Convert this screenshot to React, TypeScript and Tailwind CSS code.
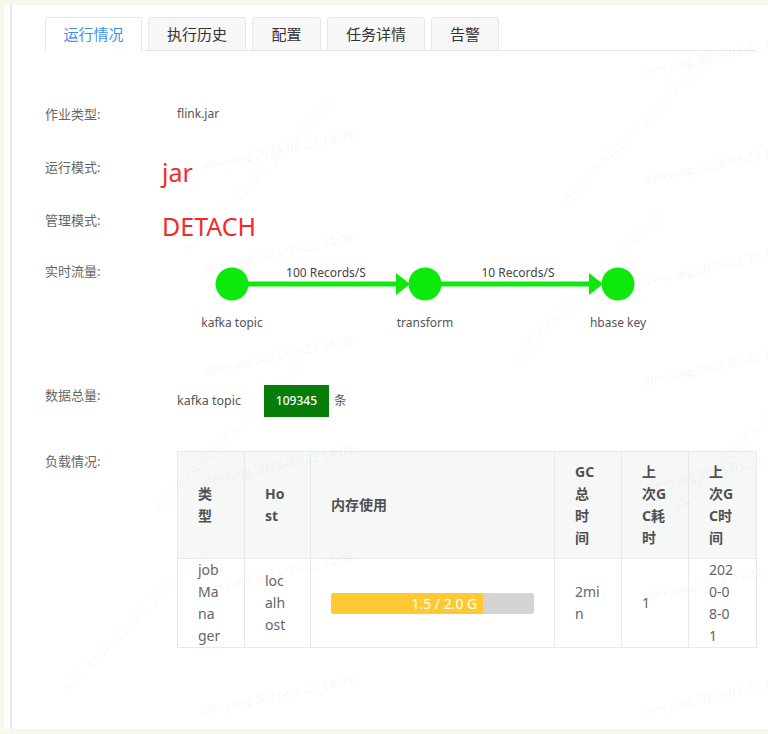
import React from "react";

const tabs = [
  { name: "运行情况", w: "w-[97px]", active: true },
  { name: "执行历史", w: "w-[98px]", active: false },
  { name: "配置", w: "w-[69px]", active: false },
  { name: "任务详情", w: "w-[98px]", active: false },
  { name: "告警", w: "w-[68px]", active: false },
];

// faint watermark text that lies over the page
const Mark = ({ className }: { className: string }) => (
  <span
    className={`absolute whitespace-nowrap font-['Liberation_Serif',serif] text-[14px] text-black/[0.06] -rotate-[12deg] ${className}`}
  >
    alexyang 2023-03-22 14:09
  </span>
);

const BigMark = ({ className }: { className: string }) => (
  <span
    className={`absolute whitespace-nowrap font-['Liberation_Sans',sans-serif] text-[15px] tracking-[1px] text-black/[0.035] -rotate-45 ${className}`}
  >
    ALEXYANGKF1 2023-03-22
  </span>
);

const Flow: React.FC = () => (
  <svg width="500" height="85" className="block">
    <line x1="86" y1="29" x2="236" y2="29" stroke="#0de80d" strokeWidth="5" />
    <polygon points="234,18 248,29 234,40" fill="#0de80d" />
    <line x1="279" y1="29" x2="429" y2="29" stroke="#0de80d" strokeWidth="5" />
    <polygon points="427,18 441,29 427,40" fill="#0de80d" />
    <circle cx="70" cy="29" r="16.5" fill="#0de80d" />
    <circle cx="263" cy="29" r="16.5" fill="#0de80d" />
    <circle cx="456" cy="29" r="16.5" fill="#0de80d" />
    <g fontSize="12" fill="#444" textAnchor="middle">
      <text x="164" y="22">100 Records/S</text>
      <text x="356" y="22">10 Records/S</text>
    </g>
    <g fontSize="12" fill="#555" textAnchor="middle">
      <text x="70" y="72">kafka topic</text>
      <text x="263" y="72">transform</text>
      <text x="456" y="72">hbase key</text>
    </g>
  </svg>
);

const th =
  "px-[20px] py-[9px] text-left align-middle font-bold text-[14px] leading-[22px] text-[#505050] bg-[#f6f7f7] border border-[#e6eaee] break-all";
const td =
  "px-[20px] py-0 text-left align-middle text-[14px] leading-[22px] text-[#666] border border-[#e6eaee] break-all";

const label = "w-[117px] text-[13px] leading-[20px] text-[#666]";

export default function App() {
  return (
    <div className="min-h-[734px] bg-[#f7f7ea] pt-[5px] pl-[4px] pb-[5px] font-['Noto_Sans','Noto_Sans_CJK_SC',sans-serif]">
      <div className="relative h-[724px] bg-white flex overflow-hidden">
        <div className="w-[7px]" />
        <div className="w-[2px] bg-[#e3e8ef]" />

        <div className="flex-1 pl-[33px] pr-[11px] pt-[12px]">
          {/* Tabs */}
          <div className="flex gap-[6px] border-b border-[#e4e7ed]">
            {tabs.map((t) => (
              <div
                key={t.name}
                className={`${t.w} h-[34px] -mb-px flex items-center justify-center rounded-t-[3px] border text-[15px] ${
                  t.active
                    ? "bg-white border-[#e4e7ed] border-b-white text-[#3f8fe6]"
                    : "bg-[#f7f7f7] border-[#e4e7ed] text-[#333]"
                }`}
              >
                {t.name}
              </div>
            ))}
          </div>

          {/* 作业类型 */}
          <div className="mt-[53px] flex items-start">
            <div className={label}>作业类型:</div>
            <div className="ml-[15px] text-[12px] leading-[20px] text-[#555]">flink.jar</div>
          </div>

          {/* 运行模式 */}
          <div className="mt-[33px] flex items-start">
            <div className={label}>运行模式:</div>
            <div className="text-[25px] leading-[30px] text-[#f42a2a]">jar</div>
          </div>

          {/* 管理模式 */}
          <div className="mt-[23px] flex items-start">
            <div className={label}>管理模式:</div>
            <div className="mt-[1px] text-[25px] leading-[30px] text-[#f42a2a]">DETACH</div>
          </div>

          {/* 实时流量 */}
          <div className="mt-[14px] flex items-start">
            <div className={`${label} mt-[6px]`}>实时流量:</div>
            <Flow />
          </div>

          {/* 数据总量 */}
          <div className="mt-[45px] flex items-start">
            <div className={label}>数据总量:</div>
            <div className="ml-[15px] flex items-center h-[32px] text-[12.5px] text-[#555]">
              <span>kafka topic</span>
              <span className="ml-[23px] w-[65px] h-[32px] flex items-center justify-center bg-[#067d06] text-[12px] text-white font-medium">
                109345
              </span>
              <span className="ml-[5px]">条</span>
            </div>
          </div>

          {/* 负载情况 */}
          <div className="mt-[34px] flex items-start">
            <div className={label}>负载情况:</div>
            <table className="ml-[15px] w-[579px] table-fixed border-collapse border border-[#e6eaee]">
              <colgroup>
                <col className="w-[67px]" />
                <col className="w-[66px]" />
                <col className="w-[244px]" />
                <col className="w-[67px]" />
                <col className="w-[67px]" />
                <col className="w-[68px]" />
              </colgroup>
              <thead>
                <tr>
                  <th className={th}>类型</th>
                  <th className={th}>Host</th>
                  <th className={th}>内存使用</th>
                  <th className={th}>GC总时间</th>
                  <th className={th}>上次GC耗时</th>
                  <th className={th}>上次GC时间</th>
                </tr>
              </thead>
              <tbody>
                <tr>
                  <td className={`${td} pr-[23px]`}>job Manager</td>
                  <td className={td}>localhost</td>
                  <td className={td}>
                    <div className="h-[21px] w-full rounded-[3px] bg-[#d4d4d4] overflow-hidden flex">
                      <div className="w-[75%] h-full bg-[#ffc933] text-right pr-[6px] text-[14px] leading-[21px] text-white">
                        1.5 / 2.0 G
                      </div>
                    </div>
                  </td>
                  <td className={td}>2min</td>
                  <td className={td}>1</td>
                  <td className={td}>2020-08-01</td>
                </tr>
              </tbody>
            </table>
          </div>
        </div>

        {/* watermark overlay */}
        <div className="pointer-events-none absolute inset-0">
          <Mark className="left-[196px] top-[135px]" />
          <Mark className="left-[196px] top-[238px]" />
          <Mark className="left-[196px] top-[340px]" />
          <Mark className="left-[196px] top-[450px]" />
          <Mark className="left-[196px] top-[558px]" />
          <Mark className="left-[196px] top-[680px]" />
          <Mark className="left-[638px] top-[40px]" />
          <Mark className="left-[638px] top-[148px]" />
          <Mark className="left-[638px] top-[250px]" />
          <Mark className="left-[638px] top-[350px]" />
          <Mark className="left-[640px] top-[455px]" />
          <Mark className="left-[640px] top-[565px]" />
          <Mark className="left-[638px] top-[680px]" />
          <BigMark className="left-[150px] top-[160px]" />
          <BigMark className="left-[530px] top-[110px]" />
          <BigMark className="left-[480px] top-[270px]" />
          <BigMark className="left-[120px] top-[420px]" />
          <BigMark className="left-[640px] top-[420px]" />
          <BigMark className="left-[30px] top-[600px]" />
        </div>
      </div>
    </div>
  );
}
